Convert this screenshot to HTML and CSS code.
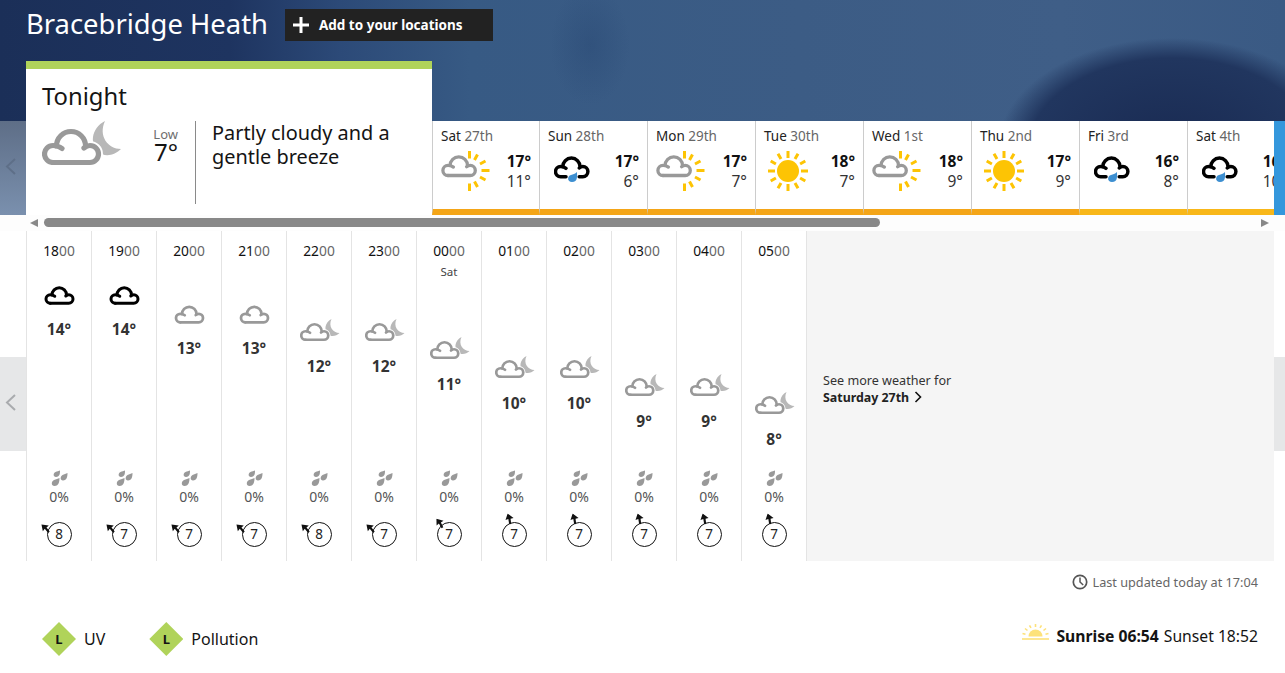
FILE: index.html
```html
<!DOCTYPE html>
<html lang="en">
<head>
<meta charset="utf-8">
<title>Bracebridge Heath</title>
<link rel="stylesheet" href="styles.css">
</head>
<body>
<svg class="defs" width="0" height="0" aria-hidden="true">
  <defs>
    <g id="cloudshape" fill="none" stroke-linecap="round">
      <path d="M11 41.5H48A8.500 8.500 0 0 0 48 24.500Q45 24.500 42 27"/>
      <path d="M43.500 25A14.500 14.500 0 0 0 14.500 25"/>
      <path d="M11 41.5A8.500 8.500 0 0 1 11 24.500Q16 24.500 20 27.500"/>
    </g>
  </defs>
  <symbol id="cloud" viewBox="-1 7 61 38">
    <use href="#cloudshape" stroke="currentColor"/>
  </symbol>
  <symbol id="raincloud" viewBox="0 0 36 26">
    <g transform="translate(0 -4.200) scale(.6)" fill="none" stroke="#000" stroke-width="5.800" stroke-linecap="round">
      <path d="M20 41.500H11A8.500 8.500 0 0 1 11 24.500Q16 24.500 20 27.500"/>
      <path d="M43.500 25A14.500 14.500 0 0 0 14.500 25"/>
      <path d="M42 41.500H48A8.500 8.500 0 0 0 48 24.500Q45 24.500 42 27"/>
    </g>
    <path d="M23 16C23 20 24 26 18 26C13 26 13 20 17 19C19 18 21 18 23 16z" fill="#3d8fd1"/>
  </symbol>
  <symbol id="partsun" viewBox="0 0 50 40">
    <path d="M28.500 0v7.500M28.500 32.500V40M40.500 19.500h8M36.500 3.500l-3 5.500M33.500 30.500l3 5.500M44.500 10l-5.500 3M39 26l5.500 3" stroke="#fdc404" stroke-width="3" fill="none"/>
    <g transform="translate(.4 -.4) scale(.6)" stroke="#999" stroke-width="5.500">
      <use href="#cloudshape"/>
    </g>
  </symbol>
  <symbol id="sun" viewBox="0 0 40 40">
    <circle cx="20" cy="20" r="11" fill="#fdc404"/>
    <path d="M20 0v7M20 33v7M0 20h7M33 20h7M10 2.700l3 5.200M27 32.100l3 5.200M2.700 10l5.200 3M32.100 27l5.200 3M30 2.700l-3 5.200M13 32.100l-3 5.200M37.300 10l-5.200 3M7.900 27l-5.200 3" stroke="#fdc404" stroke-width="3" fill="none"/>
  </symbol>
  <symbol id="nightcloud" viewBox="0 0 80 46">
    <path d="M63 0C49 7 46 25 60 33C66 36 74 33 79 28C66 28 56 15 63 0z" fill="#b8b8b8"/>
    <g stroke="#fff" stroke-width="9"><use href="#cloudshape"/></g>
    <rect x="6" y="26" width="48" height="16" fill="#fff"/>
    <g stroke="#999"><use href="#cloudshape"/></g>
  </symbol>
  <symbol id="drops" viewBox="0 0 17 16">
    <path d="M9 0.500C9 3 9 7 5 7C2 7 2 3 4.500 2C6 1.300 8 1 9 0.500z" fill="#999"/>
    <path d="M16.500 3C16.500 6 16 10.500 12 10.500C9 10.500 9 6.500 11.500 5C13 4.200 15 3.800 16.500 3z" fill="#999"/>
    <path d="M8.500 8C8.500 11 8 16 3.500 16C0 16 0 11.500 3 10C5 9 7 8.800 8.500 8z" fill="#999"/>
  </symbol>
  <symbol id="gust" viewBox="0 0 12 12">
    <path d="M0.500 0.500L8.500 1.500L6 3.700L9.500 8.300L7.800 9.800L4.100 5.300L2 7.800z" fill="#111"/>
  </symbol>
</svg>

<header class="hero">
  <div class="title-row">
    <h1 class="title">Bracebridge Heath</h1>
    <button class="add-btn" type="button">
      <svg class="add-icon" viewBox="0 0 16 16"><path d="M8 0v16M0 8h16" stroke="#fff" stroke-width="3" fill="none"/></svg>
      <span>Add to your locations</span>
    </button>
  </div>
  <div class="forecast">
    <section class="tonight">
      <h2 class="tonight-head">Tonight</h2>
      <div class="tonight-body">
        <svg class="tonight-icon"><use href="#nightcloud"/></svg>
        <div class="low"><span class="low-label">Low</span><span class="low-temp">7°</span></div>
        <p class="tonight-text">Partly cloudy and a gentle breeze</p>
      </div>
    </section>
    <ul class="days">
      <li class="day day-first"><p class="day-name">Sat <span>27th</span></p><div class="day-main"><svg class="ico-partsun"><use href="#partsun"/></svg><p class="temps"><b>17°</b><span>11°</span></p></div></li>
      <li class="day"><p class="day-name">Sun <span>28th</span></p><div class="day-main"><svg class="ico-rain"><use href="#raincloud"/></svg><p class="temps"><b>17°</b><span>6°</span></p></div></li>
      <li class="day"><p class="day-name">Mon <span>29th</span></p><div class="day-main"><svg class="ico-partsun"><use href="#partsun"/></svg><p class="temps"><b>17°</b><span>7°</span></p></div></li>
      <li class="day"><p class="day-name">Tue <span>30th</span></p><div class="day-main"><svg class="ico-sun"><use href="#sun"/></svg><p class="temps"><b>18°</b><span>7°</span></p></div></li>
      <li class="day"><p class="day-name">Wed <span>1st</span></p><div class="day-main"><svg class="ico-partsun"><use href="#partsun"/></svg><p class="temps"><b>18°</b><span>9°</span></p></div></li>
      <li class="day"><p class="day-name">Thu <span>2nd</span></p><div class="day-main"><svg class="ico-sun"><use href="#sun"/></svg><p class="temps"><b>17°</b><span>9°</span></p></div></li>
      <li class="day day-yellow"><p class="day-name">Fri <span>3rd</span></p><div class="day-main"><svg class="ico-rain"><use href="#raincloud"/></svg><p class="temps"><b>16°</b><span>8°</span></p></div></li>
      <li class="day day-yellow day-last"><p class="day-name">Sat <span>4th</span></p><div class="day-main"><svg class="ico-rain"><use href="#raincloud"/></svg><p class="temps"><b>16°</b><span>10°</span></p></div></li>
    </ul>
    <div class="next-edge"></div>
  </div>
  <div class="prev-edge"><svg class="chev" viewBox="0 0 11 17"><path d="M10 1L2 8.500l8 7.500" fill="none" stroke="#5e6f88" stroke-width="2"/></svg></div>
</header>

<div class="scrollbar">
  <span class="arrow arrow-left"></span>
  <span class="thumb"></span>
  <span class="arrow arrow-right"></span>
</div>

<main class="hours-wrap">
  <div class="hours">
    <div class="hour"><p class="time">18<span>00</span></p><div class="plot"><svg class="ico-cloud black lvl0"><use href="#cloud"/></svg><p class="temp">14°</p></div><svg class="ico-drops"><use href="#drops"/></svg><p class="pct">0%</p><div class="wind"><svg class="gust g-nw"><use href="#gust"/></svg><span class="speed">8</span></div></div>
    <div class="hour"><p class="time">19<span>00</span></p><div class="plot"><svg class="ico-cloud black lvl0"><use href="#cloud"/></svg><p class="temp">14°</p></div><svg class="ico-drops"><use href="#drops"/></svg><p class="pct">0%</p><div class="wind"><svg class="gust g-nw"><use href="#gust"/></svg><span class="speed">7</span></div></div>
    <div class="hour"><p class="time">20<span>00</span></p><div class="plot"><svg class="ico-cloud lvl1"><use href="#cloud"/></svg><p class="temp">13°</p></div><svg class="ico-drops"><use href="#drops"/></svg><p class="pct">0%</p><div class="wind"><svg class="gust g-nw"><use href="#gust"/></svg><span class="speed">7</span></div></div>
    <div class="hour"><p class="time">21<span>00</span></p><div class="plot"><svg class="ico-cloud lvl1"><use href="#cloud"/></svg><p class="temp">13°</p></div><svg class="ico-drops"><use href="#drops"/></svg><p class="pct">0%</p><div class="wind"><svg class="gust g-nw"><use href="#gust"/></svg><span class="speed">7</span></div></div>
    <div class="hour"><p class="time">22<span>00</span></p><div class="plot"><svg class="ico-night lvl2"><use href="#nightcloud"/></svg><p class="temp">12°</p></div><svg class="ico-drops"><use href="#drops"/></svg><p class="pct">0%</p><div class="wind"><svg class="gust g-nw"><use href="#gust"/></svg><span class="speed">8</span></div></div>
    <div class="hour"><p class="time">23<span>00</span></p><div class="plot"><svg class="ico-night lvl2"><use href="#nightcloud"/></svg><p class="temp">12°</p></div><svg class="ico-drops"><use href="#drops"/></svg><p class="pct">0%</p><div class="wind"><svg class="gust g-nw"><use href="#gust"/></svg><span class="speed">7</span></div></div>
    <div class="hour"><p class="time">00<span>00</span></p><p class="next-day">Sat</p><div class="plot"><svg class="ico-night lvl3"><use href="#nightcloud"/></svg><p class="temp">11°</p></div><svg class="ico-drops"><use href="#drops"/></svg><p class="pct">0%</p><div class="wind"><svg class="gust g-nnw"><use href="#gust"/></svg><span class="speed">7</span></div></div>
    <div class="hour"><p class="time">01<span>00</span></p><div class="plot"><svg class="ico-night lvl4"><use href="#nightcloud"/></svg><p class="temp">10°</p></div><svg class="ico-drops"><use href="#drops"/></svg><p class="pct">0%</p><div class="wind"><svg class="gust g-n"><use href="#gust"/></svg><span class="speed">7</span></div></div>
    <div class="hour"><p class="time">02<span>00</span></p><div class="plot"><svg class="ico-night lvl4"><use href="#nightcloud"/></svg><p class="temp">10°</p></div><svg class="ico-drops"><use href="#drops"/></svg><p class="pct">0%</p><div class="wind"><svg class="gust g-n"><use href="#gust"/></svg><span class="speed">7</span></div></div>
    <div class="hour"><p class="time">03<span>00</span></p><div class="plot"><svg class="ico-night lvl5"><use href="#nightcloud"/></svg><p class="temp">9°</p></div><svg class="ico-drops"><use href="#drops"/></svg><p class="pct">0%</p><div class="wind"><svg class="gust g-n"><use href="#gust"/></svg><span class="speed">7</span></div></div>
    <div class="hour"><p class="time">04<span>00</span></p><div class="plot"><svg class="ico-night lvl5"><use href="#nightcloud"/></svg><p class="temp">9°</p></div><svg class="ico-drops"><use href="#drops"/></svg><p class="pct">0%</p><div class="wind"><svg class="gust g-n"><use href="#gust"/></svg><span class="speed">7</span></div></div>
    <div class="hour"><p class="time">05<span>00</span></p><div class="plot"><svg class="ico-night lvl6"><use href="#nightcloud"/></svg><p class="temp">8°</p></div><svg class="ico-drops"><use href="#drops"/></svg><p class="pct">0%</p><div class="wind"><svg class="gust g-n"><use href="#gust"/></svg><span class="speed">7</span></div></div>
    <a class="more" href="#"><span>See more weather for</span><strong>Saturday 27th <svg class="more-chev" viewBox="0 0 8 12"><path d="M1.500 1l5 5-5 5" fill="none" stroke="#111" stroke-width="1.600"/></svg></strong></a>
  </div>
  <div class="side side-left"><svg class="chev" viewBox="0 0 11 17"><path d="M10 1L2 8.500l8 7.500" fill="none" stroke="#a9abae" stroke-width="2"/></svg></div>
  <div class="side side-right"></div>
</main>

<footer class="foot">
  <p class="updated"><svg class="clock" viewBox="0 0 16 16"><circle cx="8" cy="8" r="6.700" fill="none" stroke="#555" stroke-width="1.700"/><path d="M8 3.500V8l3.200 3" fill="none" stroke="#555" stroke-width="1.500"/></svg>Last updated today at 17:04</p>
  <div class="foot-row">
    <div class="levels">
      <div class="level"><span class="diamond"><b>L</b></span><span>UV</span></div>
      <div class="level"><span class="diamond"><b>L</b></span><span>Pollution</span></div>
    </div>
    <div class="sun-times">
      <svg class="sunrise" viewBox="0 0 27 16"><path d="M6.500 12.500a7 7 0 0 1 14 0z" fill="#fde27a"/><path d="M13.500 0v3M7.500 1.300L9 3.800M19.500 1.300L18 3.800M3 4.500l2.500 2M24 4.500l-2.500 2M0.500 9.500l3 .8M26.500 9.500l-3 .8" stroke="#fde27a" stroke-width="1.600" fill="none"/><path d="M0 15h27" stroke="#fde27a" stroke-width="1.600" fill="none"/></svg>
      <b>Sunrise 06:54</b> <span>Sunset 18:52</span>
    </div>
  </div>
</footer>
</body>
</html>
```
FILE: styles.css
```css
* { box-sizing: border-box; }
html, body { margin: 0; padding: 0; }
body {
  width: 1285px;
  height: 673px;
  overflow: hidden;
  background: #fff;
  color: #141414;
  font-family: "Noto Sans", "Open Sans", sans-serif;
}
p, h1, h2, ul { margin: 0; padding: 0; }
.defs { position: absolute; }

/* hero */
.hero {
  position: relative;
  height: 215px;
  background:
    radial-gradient(ellipse 175px 112px at 1172px 150px, #192a52 0, #21365f 82%, rgba(33,54,95,0) 100%),
    radial-gradient(ellipse 40px 60px at 590px 45px, rgba(35,66,110,.35), rgba(35,66,110,0)),
    linear-gradient(90deg, #1b2f58 0, #1e3460 230px, #2c4a78 340px, #375a84 470px, #3c5c85 800px, #3f5e87 1060px, #3a5a84 1285px);
}
.title-row {
  display: flex;
  align-items: center;
  height: 61px;
  padding: 9px 0 20px 26px;
}
.title {
  font-size: 27.400px;
  font-weight: 400;
  color: #fff;
  line-height: 32px;
  margin-bottom: 2px;
  white-space: nowrap;
}
.add-btn {
  display: flex;
  align-items: center;
  gap: 10px;
  width: 208px;
  height: 32px;
  margin-left: 17px;
  padding: 0 0 0 8px;
  border: 0;
  background: #222;
  color: #fff;
  font: 700 13.500px "Noto Sans", sans-serif;
}
.add-icon { width: 16px; height: 16px; }
.forecast { display: flex; align-items: flex-end; padding-left: 26px; height: 154px; }
.prev-edge {
  position: absolute;
  left: 0;
  top: 121px;
  width: 26px;
  height: 94px;
  display: flex;
  align-items: center;
  padding-left: 5px;
  background: linear-gradient(180deg, #5e6e87, #7a90ae);
}
.chev { width: 11px; height: 17px; margin-top: -4px; }

.tonight {
  flex: none;
  width: 406px;
  height: 154px;
  background: #fff;
  border-top: 8px solid #b0d35a;
  padding: 12px 0 0 16px;
}
.tonight-head { font-size: 23.800px; font-weight: 400; line-height: 30px; color: #141414; }
.tonight-body { display: flex; margin-top: 10px; }
.tonight-icon { width: 80px; height: 46px; flex: none; stroke-width: 5.200px; }
.low { width: 57px; flex: none; display: flex; flex-direction: column; align-items: flex-end; padding: 6px 1px 0 0; }
.low-label { font-size: 13px; line-height: 15px; color: #6e6e6e; }
.low-temp { font-size: 24px; line-height: 20px; color: #141414; }
.tonight-text {
  margin-left: 16px;
  width: 204px;
  height: 83px;
  padding: 0 0 0 16px;
  border-left: 1px solid #8a8a8a;
  font-size: 19.900px;
  line-height: 24px;
  color: #141414;
}
.days { display: flex; list-style: none; height: 94px; flex: none; }
.day {
  flex: none;
  width: 108px;
  height: 94px;
  background: #fff;
  border-left: 1px solid #ccc;
  border-bottom: 6px solid #f4a517;
  padding: 6px 0 0 8px;
  overflow: hidden;
}
.day-first { width: 107px; }
.day-last { width: 87px; }
.day-last .day-main { width: 99px; }
.day-yellow { border-bottom-color: #f8b719; }
.day-name { font-size: 13.500px; line-height: 18px; color: #222; white-space: nowrap; }
.day-name span { color: #666; }
.day-main { display: flex; justify-content: space-between; height: 50px; margin-top: 6px; }
.ico-partsun { width: 50px; height: 40px; flex: none; }
.ico-rain { width: 36px; height: 26px; margin: 5px 0 0 6px; flex: none; }
.ico-sun { width: 40px; height: 40px; margin-left: 4px; flex: none; }
.temps {
  display: flex;
  flex-direction: column;
  align-items: flex-end;
  width: 40px;
  margin: -1px 8px 0 0;
  flex: none;
  font-size: 15.500px;
  white-space: nowrap;
}
.temps b { font-weight: 700; color: #111; line-height: 22px; }
.temps span { font-weight: 400; color: #333; line-height: 18px; }
.next-edge { flex: none; width: 11px; height: 94px; background: #3497dc; }

/* scrollbar */
.scrollbar { display: flex; align-items: center; height: 16px; background: #fdfdfd; padding: 0 16px 0 30px; }
.arrow { width: 0; height: 0; border-top: 4.500px solid transparent; border-bottom: 4.500px solid transparent; flex: none; }
.arrow-left { border-right: 8px solid #888; }
.arrow-right { border-left: 8px solid #888; margin-left: auto; }
.thumb { width: 836px; height: 9px; background: #888; border-radius: 5px; margin: -1px 0 0 6px; }

/* hours */
.hours-wrap { position: relative; height: 330px; }
.hours { display: flex; height: 330px; width: 1274px; padding-left: 26px; }
.hour {
  position: relative;
  flex: none;
  width: 65px;
  border-left: 1px solid #e4e4e4;
  display: flex;
  flex-direction: column;
  align-items: center;
  padding-top: 11px;
  text-align: center;
}
.time { font-size: 13.800px; line-height: 18px; color: #111; height: 18px; }
.time span { color: #666; }
.next-day { position: absolute; top: 34px; left: 0; right: 0; font-size: 11.500px; line-height: 14px; color: #444; }
.plot { height: 210px; display: flex; flex-direction: column; align-items: center; flex: none; padding-top: 26px; }
.ico-cloud { width: 31px; height: 19px; color: #999; flex: none; stroke-width: 5.500px; }
.ico-cloud.black { color: #000; stroke-width: 6px; }
.ico-night { width: 40px; height: 23px; flex: none; margin-left: 1px; stroke-width: 5.400px; }
.lvl0 { margin-top: 0; }
.lvl1 { margin-top: 19px; }
.lvl2 { margin-top: 33px; }
.lvl3 { margin-top: 51px; }
.lvl4 { margin-top: 70px; }
.lvl5 { margin-top: 88px; }
.lvl6 { margin-top: 106px; }
.temp { font-size: 15.500px; font-weight: 700; line-height: 20px; margin-top: 14px; color: #333; }
.ico-drops { width: 17px; height: 16px; flex: none; }
.pct { font-size: 14px; line-height: 16px; margin-top: 3px; color: #555; }
.wind { position: relative; width: 25px; height: 25px; margin-top: 17px; flex: none; border: 1.500px solid #111; border-radius: 50%; display: flex; align-items: center; justify-content: center; }
.speed { font-size: 13.500px; line-height: 1; color: #222; }
.gust { position: absolute; width: 11px; height: 11px; }
.g-nw { left: -7px; top: 1px; }
.g-nnw { left: -3px; top: -4px; transform: rotate(10deg); }
.g-n { left: 1px; top: -8px; transform: rotate(30deg); }
.more {
  flex: 1;
  display: flex;
  flex-direction: column;
  background: #f5f5f5;
  border-left: 1px solid #e4e4e4;
  padding: 142px 0 0 16px;
  font-size: 12.600px;
  line-height: 16px;
  color: #333;
  text-decoration: none;
}
.more strong { font-size: 12.400px; font-weight: 700; color: #222; margin-top: 1px; }
.more-chev { width: 8px; height: 12px; margin-left: 2px; vertical-align: -1px; }
.side { position: absolute; top: 126px; width: 11px; height: 94px; background: #e6e7e8; display: flex; align-items: center; }
.side-left { left: 0; width: 26px; padding-left: 5px; }
.side-right { right: 0; }

/* footer */
.foot { padding: 0 27px 0 42px; }
.updated { display: flex; align-items: center; justify-content: flex-end; height: 22px; margin-top: 10px; font-size: 12.700px; color: #666; }
.clock { width: 16px; height: 16px; margin-right: 5px; }
.foot-row { display: flex; justify-content: space-between; align-items: center; margin-top: 29px; height: 34px; }
.levels { display: flex; gap: 44px; }
.level { display: flex; align-items: center; gap: 8px; font-size: 16px; color: #141414; }
.diamond {
  width: 34px;
  height: 34px;
  display: flex;
  align-items: center;
  justify-content: center;
  background: #b0d35a;
  clip-path: polygon(50% 0, 100% 50%, 50% 100%, 0 50%);
  font-size: 13px;
}
.sun-times { display: flex; align-items: center; gap: 5px; margin-bottom: 6px; font-size: 15.700px; color: #141414; }
.sun-times b { font-weight: 700; }
.sunrise { width: 27px; height: 16px; margin: 0 2px 8px 0; }
```
